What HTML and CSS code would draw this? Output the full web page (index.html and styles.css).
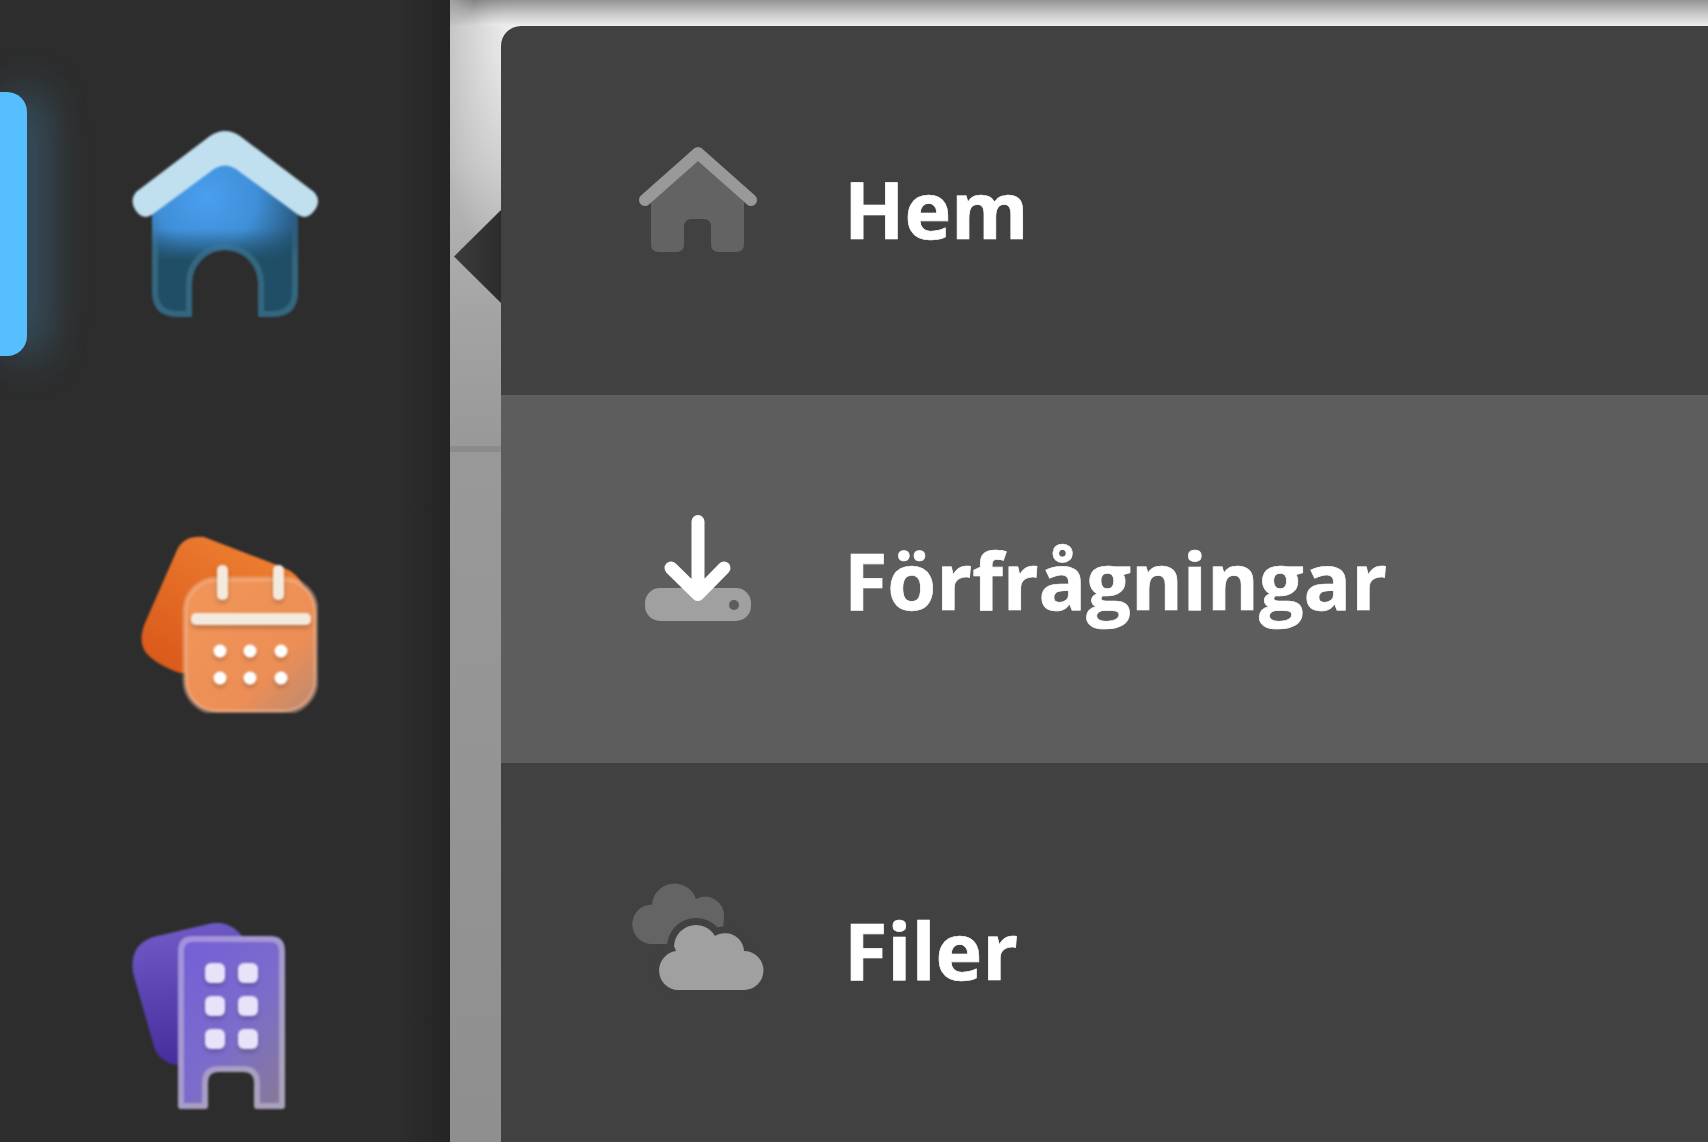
FILE: index.html
```html
<!DOCTYPE html>
<html lang="sv">

<head>
    <meta charset="UTF-8">
    <meta name="viewport" content="width=device-width, initial-scale=1.0">
    <title>Meny</title>
    <link rel="stylesheet" href="styles.css">
</head>

<body>
    <aside class="sidebar">
        <span class="active-bar"></span>

        <svg class="app-icon" viewBox="0 0 186 186">
            <defs>
                <radialGradient id="home-glow" gradientUnits="userSpaceOnUse" cx="75" cy="66" r="100">
                    <stop offset="0" stop-color="#4a9fee" />
                    <stop offset="0.5" stop-color="#3f8fd8" />
                    <stop offset="1" stop-color="#24506e" />
                </radialGradient>
                <linearGradient id="home-fade" gradientUnits="userSpaceOnUse" x1="0" y1="98" x2="0" y2="130">
                    <stop offset="0" stop-color="#1f4e66" stop-opacity="0" />
                    <stop offset="1" stop-color="#1f4e66" />
                </linearGradient>
                <linearGradient id="home-edge" gradientUnits="userSpaceOnUse" x1="0" y1="85" x2="0" y2="130">
                    <stop offset="0" stop-color="#4a8098" stop-opacity="0" />
                    <stop offset="1" stop-color="#4a8098" stop-opacity="0.5" />
                </linearGradient>
                <filter id="soft" x="-20%" y="-20%" width="140%" height="140%">
                    <feDropShadow dx="0" dy="3" stdDeviation="2" flood-color="#000" flood-opacity="0.22" />
                </filter>
            </defs>
            <path d="M20 74 L78 30 Q93 20 108 30 L166 74 V160 Q166 186 140 186 H126 V152 A33 33 0 0 0 60 152 V186 H46 Q20 186 20 160 Z" fill="url(#home-glow)" />
            <path d="M20 74 L78 30 Q93 20 108 30 L166 74 V160 Q166 186 140 186 H126 V152 A33 33 0 0 0 60 152 V186 H46 Q20 186 20 160 Z" fill="url(#home-fade)" />
            <path d="M23 85 V160 Q23 183 46 183 H57 V152 A36 36 0 0 1 129 152 V183 H140 Q163 183 163 160 V85" fill="none" stroke="url(#home-edge)" stroke-width="6" />
            <path d="M4 61 L78 5 Q93 -5 108 5 L182 61 Q190 70 182 80 Q174 90 165 83 L108 41 Q93 28 78 41 L21 83 Q12 90 4 80 Q-3 70 4 61 Z" fill="#c0e0ef" />
        </svg>

        <svg class="app-icon" viewBox="0 0 186 186">
            <defs>
                <linearGradient id="cal-back" x1="0.9" y1="0" x2="0.1" y2="1">
                    <stop offset="0" stop-color="#f08434" />
                    <stop offset="1" stop-color="#d9581a" />
                </linearGradient>
                <linearGradient id="cal-front" x1="0.2" y1="0.2" x2="1" y2="1">
                    <stop offset="0" stop-color="#f09458" />
                    <stop offset="0.6" stop-color="#ec8e56" />
                    <stop offset="1" stop-color="#b98a72" />
                </linearGradient>
            </defs>
            <path d="M45 23 Q52 8 72 10 L150 40 Q166 46 172 60 V146 H48 Q30 140 18 130 Q4 118 13 96 Z" fill="url(#cal-back)" />
            <rect x="53" y="52" width="131" height="133" rx="32" fill="url(#cal-front)" stroke="#f4bfa0" stroke-opacity="0.45" stroke-width="5" />
            <g filter="url(#soft)">
                <rect x="85" y="38" width="11" height="35" rx="5" fill="#f3e9dd" />
                <rect x="141" y="38" width="11" height="35" rx="5" fill="#f3e9dd" />
                <rect x="59" y="86" width="120" height="12" rx="5" fill="#f3e9dd" />
                <circle cx="88" cy="124" r="6.5" fill="#fff" />
                <circle cx="118" cy="124" r="6.5" fill="#fff" />
                <circle cx="149" cy="124" r="6.5" fill="#fff" />
                <circle cx="88" cy="151" r="6.5" fill="#fff" />
                <circle cx="118" cy="151" r="6.5" fill="#fff" />
                <circle cx="149" cy="151" r="6.5" fill="#fff" />
            </g>
        </svg>

        <svg class="app-icon" viewBox="0 0 186 186">
            <defs>
                <linearGradient id="bld-back" x1="0.5" y1="0" x2="0.6" y2="1">
                    <stop offset="0" stop-color="#6f5ac6" />
                    <stop offset="1" stop-color="#452c9c" />
                </linearGradient>
                <linearGradient id="bld-front" x1="0.1" y1="0" x2="0.9" y2="1">
                    <stop offset="0" stop-color="#7560d6" />
                    <stop offset="0.55" stop-color="#7c6ccb" />
                    <stop offset="1" stop-color="#86799c" />
                </linearGradient>
                <linearGradient id="bld-edge" x1="0" y1="0" x2="0.6" y2="1">
                    <stop offset="0" stop-color="#a391de" />
                    <stop offset="1" stop-color="#aaa1bd" />
                </linearGradient>
            </defs>
            <path d="M21 14 L81 0 Q100 -2 112 16 L60 142 H43 Q28 138 23 127 L1 50 Q-3 22 21 14 Z" fill="url(#bld-back)" />
            <path d="M49 28 Q49 16 61 16 H138 Q150 16 150 28 V183 H125 V160 Q125 146 111 146 H87 Q73 146 73 160 V183 H49 Z" fill="url(#bld-front)" stroke="url(#bld-edge)" stroke-width="6" stroke-linejoin="round" />
            <g filter="url(#soft)">
                <rect x="73" y="40" width="20" height="20" rx="6" fill="#e9e3f9" />
                <rect x="106" y="40" width="20" height="20" rx="6" fill="#e9e3f9" />
                <rect x="73" y="73" width="20" height="20" rx="6" fill="#e9e3f9" />
                <rect x="106" y="73" width="20" height="20" rx="6" fill="#e9e3f9" />
                <rect x="73" y="106" width="20" height="20" rx="6" fill="#e9e3f9" />
                <rect x="106" y="106" width="20" height="20" rx="6" fill="#e9e3f9" />
            </g>
        </svg>
    </aside>

    <main class="content">
        <section class="panel">
            <span class="panel-arrow"></span>

            <a class="menu-row" href="#">
                <svg class="row-icon" viewBox="0 0 132 132">
                    <path d="M19 58 L66 16 L112 58 V100 Q112 108 104 108 H87 Q79 108 79 100 V83 Q79 75 71 75 H60 Q52 75 52 83 V100 Q52 108 44 108 H27 Q19 108 19 100 Z" fill="#636363" />
                    <path d="M13 56 L66 9 L119 56" fill="none" stroke="#999" stroke-width="12" stroke-linecap="round" stroke-linejoin="round" />
                </svg>
                <span class="row-label row-label-first">Hem</span>
            </a>

            <a class="menu-row selected" href="#">
                <svg class="row-icon" viewBox="0 0 132 132">
                    <rect x="13" y="75" width="106" height="33" rx="15" fill="#a0a0a0" />
                    <circle cx="102" cy="92" r="5" fill="#5d5d5d" />
                    <path d="M66 8.5 V81 M39 55 L66 81.5 L92 55" fill="none" stroke="#fff" stroke-width="13" stroke-linecap="round" stroke-linejoin="round" />
                </svg>
                <span class="row-label">Förfrågningar</span>
            </a>

            <a class="menu-row" href="#">
                <svg class="row-icon" viewBox="0 0 132 132">
                    <path d="M20 63 A19.75 19.75 0 0 1 20 23.5 A22.6 22.6 0 0 1 64 18 A19 19 0 0 1 92 36 Q92 50 85 63 Z" fill="#646464" />
                    <path d="M46 109 H112 A19.5 19.5 0 0 0 112 70 A19 19 0 0 0 83 55 A22 22 0 0 0 42 65 L44 70 A19.6 19.6 0 0 0 46 109 Z" fill="#a0a0a0" stroke="#414141" stroke-width="14" paint-order="stroke" />
                </svg>
                <span class="row-label row-label-last">Filer</span>
            </a>
        </section>
    </main>
</body>

</html>
```

FILE: styles.css
```css
* {
    box-sizing: border-box;
    margin: 0;
}

html,
body {
    height: 100%;
    overflow: hidden;
}

body {
    display: flex;
    background: #999;
    font-family: "Open Sans", Arial, sans-serif;
}

.sidebar {
    position: relative;
    width: 450px;
    flex: none;
    display: flex;
    flex-direction: column;
    gap: 210px;
    padding: 131px 0 0 132px;
    background: linear-gradient(to right, #2d2d2d 0, #2d2d2d 400px, #242424 450px);
}

.active-bar {
    position: absolute;
    left: 0;
    top: 92px;
    width: 27px;
    height: 264px;
    border-radius: 0 20px 20px 0;
    background: #56bfff;
    box-shadow: 14px 0 44px 0 rgba(86, 191, 255, 0.4);
}

.app-icon {
    width: 186px;
    height: 186px;
    flex: none;
    filter: blur(0.8px);
}

.content {
    flex: 1 1 0%;
    padding: 26px 0 0 51px;
    background:
        linear-gradient(#8b8b8b, #8b8b8b) 0 446px / 51px 6px no-repeat,
        radial-gradient(circle 24px at 0 0, rgba(255, 255, 255, 0.3), rgba(255, 255, 255, 0)),
        linear-gradient(to bottom, rgba(0, 0, 0, 0.38) 0, rgba(0, 0, 0, 0.3) 5px, rgba(0, 0, 0, 0.14) 15px, rgba(0, 0, 0, 0) 26px) 0 0 / 100% 26px no-repeat,
        linear-gradient(to right, rgba(238, 238, 238, 0) 25px, #eee 60px) 0 0 / 100% 26px no-repeat,
        radial-gradient(ellipse 80px 240px at 60px 30px, #eee 0, rgba(238, 238, 238, 0) 100%),
        linear-gradient(to bottom, #b8b8b8 0, #b8b8b8 160px, #a3a3a3 320px, #999 440px, #8f8f8f 1142px);
}

.panel {
    position: relative;
    height: 100%;
    background: #414141;
    border-top-left-radius: 20px;
}

.panel-arrow {
    position: absolute;
    left: -47px;
    top: 184px;
    width: 47px;
    height: 93px;
    background: linear-gradient(to right, #3c3c3c, #2c2c2c);
    clip-path: polygon(100% 0, 0 50%, 100% 100%);
}

.menu-row {
    height: 368.5px;
    display: flex;
    align-items: center;
    gap: 80px;
    padding-left: 131px;
    color: white;
    text-decoration: none;
}

.menu-row.selected {
    background: #5d5d5d;
}

.row-icon {
    width: 132px;
    height: 132px;
    flex: none;
}

.row-label {
    font-size: 79px;
    font-weight: 700;
    line-height: 1;
    margin-top: 2px;
    -webkit-text-stroke: 0.7px white;
}

.row-label-first {
    margin-top: -4px;
}

.row-label-last {
    margin-top: 4px;
}
```
